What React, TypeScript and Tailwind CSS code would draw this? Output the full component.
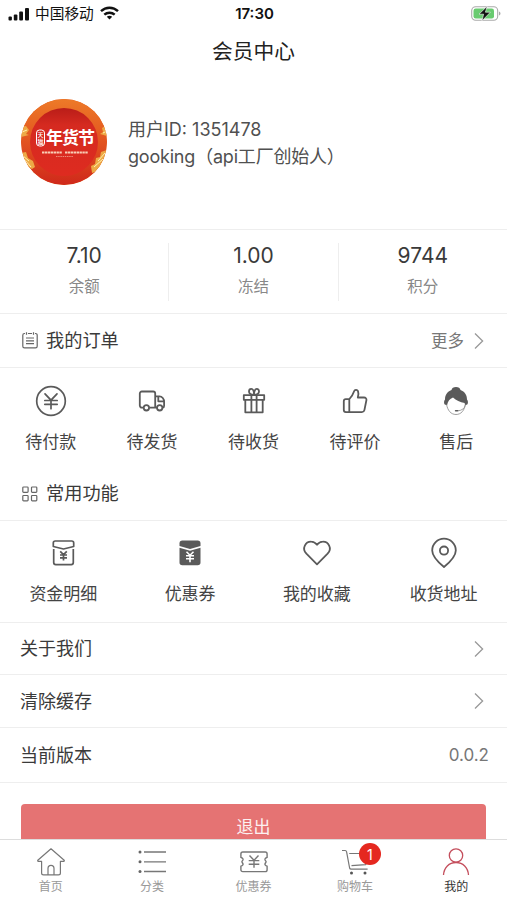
import type { ReactNode } from "react";

type IconItem = { label: string; icon: ReactNode };

const ink = "#5a5a5a";

function SignalIcon() {
  return (
    <svg width="22" height="14" viewBox="0 0 22 14" fill="#111">
      <rect x="0.5" y="9.5" width="3.4" height="4" rx="1" />
      <rect x="5.8" y="7.5" width="3.6" height="6" rx="1" />
      <rect x="11.2" y="4.5" width="3.8" height="9" rx="1" />
      <rect x="17" y="1" width="4" height="12.5" rx="1" />
    </svg>
  );
}

function WifiIcon() {
  return (
    <svg width="19" height="14" viewBox="0 0 19 14" fill="none" stroke="#111" strokeWidth="2.4">
      <path d="M1 5.2C5.8 .6 13.2 .6 18 5.2" />
      <path d="M4.3 8.7c3-2.7 7.4-2.7 10.4 0" />
      <path d="M9.5 13.4L6.8 10.8c1.6-1.3 3.8-1.3 5.4 0z" fill="#111" stroke="none" />
    </svg>
  );
}

function BatteryIcon() {
  return (
    <svg width="30" height="16" viewBox="0 0 30 16">
      <rect x="0.7" y="0.8" width="26" height="13.4" rx="4" fill="#fff" stroke="#aaa" strokeWidth="1.1" />
      <rect x="2.5" y="2.6" width="20.5" height="9.8" rx="2.2" fill="#69cb70" />
      <path d="M28 5.5v4c2-.7 2-3.3 0-4z" fill="#aaa" />
      <path d="M16.2 .2L8 8.2h4.6L11 14.800l8.400-8.600h-5z" fill="#111" stroke="#fff" strokeWidth=".6" />
    </svg>
  );
}

function Avatar() {
  return (
    <div className="relative size-[86px] shrink-0 overflow-hidden rounded-full bg-[#e6601f]">
      <svg className="absolute inset-0" width="86" height="86" viewBox="0 0 86 86">
        <defs>
          <linearGradient id="ring" x1="0" y1="0" x2="0" y2="1">
            <stop offset="0" stopColor="#ed7a28" />
            <stop offset="0.5" stopColor="#e2531f" />
            <stop offset="1" stopColor="#cf281b" />
          </linearGradient>
          <linearGradient id="disc" x1="0" y1="0" x2="0" y2="1">
            <stop offset="0" stopColor="#b91d18" />
            <stop offset="0.25" stopColor="#d52a20" />
            <stop offset="1" stopColor="#de2b20" />
          </linearGradient>
        </defs>
        <circle cx="43" cy="43" r="43" fill="url(#ring)" />
        <circle cx="43" cy="43" r="34" fill="url(#disc)" />
        <path d="M0 28l5-1 3 4-3 4 3 1-8 2zM0 54l5-1 2 6 5 3 2 6-3 2-6-3zM86 51l-6 2-1 5-4 1-1 6-4 2 1 7 6-2 9-12zM86 26l-5 3 1 4-3 2 7 2z" fill="#edaa46" />
        <path d="M1 56l7 6M3 60l7 8M84 54l-7 8M82 60l-9 8M1 33l5-2M82 34l4-2" stroke="#fff0b0" strokeWidth="1" />
        <rect x="15.5" y="31" width="8" height="16" rx="3" fill="none" stroke="#fff" strokeWidth="1" />
      </svg>
      <div className="absolute left-[16px] top-[32px] w-[7px] text-center text-[6px] font-medium leading-[7px] text-white">
        天猫
      </div>
      <div className="absolute left-[25px] top-[29px] whitespace-nowrap text-[17px] font-bold leading-[20px] tracking-[-1px] text-white">
        年货节
      </div>
      <svg className="absolute inset-0" width="86" height="86" viewBox="0 0 86 86" stroke="#f8cdb5">
        <path d="M21 53.5h20M44 53.5h23" strokeWidth="1.8" strokeDasharray="2.4 .5" />
        <path d="M35 57.5h17" strokeWidth="1" strokeDasharray="1.5 .7" strokeOpacity=".6" />
      </svg>
    </div>
  );
}

function Chevron() {
  return (
    <svg width="10" height="18" viewBox="0 0 10 18" fill="none" stroke="#999" strokeWidth="1.3">
      <path d="M1 1.5L8.6 9 1 16.5" />
    </svg>
  );
}

const stats = [
  { value: "7.10", label: "余额" },
  { value: "1.00", label: "冻结" },
  { value: "9744", label: "积分" },
];

const orders: IconItem[] = [
  {
    label: "待付款",
    icon: (
      <svg width="32" height="32" viewBox="0 0 32 32" fill="none" stroke={ink} strokeWidth="1.7" strokeLinecap="round">
        <circle cx="16" cy="16" r="14.3" />
        <path d="M10 8.8l6 6.4 6-6.4M16 15.2v8.5M9.8 15.5h12.4M9.8 19.3h12.4" />
      </svg>
    ),
  },
  {
    label: "待发货",
    icon: (
      <svg width="32" height="32" viewBox="0 0 32 32" fill="none" stroke={ink} strokeWidth="1.8" strokeLinejoin="round">
        <path d="M7.3 22.6H5.8a2 2 0 0 1-2-2V8.5a2 2 0 0 1 2-2h11.4a2 2 0 0 1 2 2v14.1M13.500 22.600h7.500M19.200 11.400h4.300c2.600 0 4.600 2.600 4.600 5.400v4c0 1-.5 1.700-1.200 1.800M22.300 12v4.300h5.600" />
        <circle cx="10.4" cy="22.8" r="2.7" fill="#fff" />
        <circle cx="23.7" cy="22.8" r="2.7" fill="#fff" />
      </svg>
    ),
  },
  {
    label: "待收货",
    icon: (
      <svg width="32" height="32" viewBox="0 0 32 32" fill="none" stroke={ink} strokeWidth="1.8" strokeLinejoin="round">
        <rect x="5.8" y="10.200" width="20.400" height="4.600" />
        <path d="M7.300 14.800v12.500h17.400V14.800M13.400 10.200v17.100M18.600 10.200v17.100" />
        <path d="M16 9.600c-3 0-5-1.400-5-3.200 0-1.500 1-2.500 2.300-2.500 1.800 0 2.700 2.600 2.700 5.700zm0 0c0-3.100 1-5.700 2.800-5.700C20.100 3.900 21 5 21 6.400c0 1.800-2 3.200-5 3.200z" />
      </svg>
    ),
  },
  {
    label: "待评价",
    icon: (
      <svg width="32" height="32" viewBox="0 0 32 32" fill="none" stroke={ink} strokeWidth="1.800" strokeLinejoin="round">
        <path d="M10.300 14.200H6.800a2 2 0 0 0-2 2v8.900a2 2 0 0 0 2 2h16.100a2.600 2.600 0 0 0 2.500-2l2-9.800c.300-1.700-.8-2.800-2.400-2.800h-6.200c.7-2.200.9-4.500.2-6.300-.8-1.900-3.300-1.700-3.900.1-1.100 3.200-2.700 6-4.800 7.900zM10.300 14.200v12.900" />
      </svg>
    ),
  },
  {
    label: "售后",
    icon: (
      <svg width="32" height="32" viewBox="0 0 32 32">
        <path d="M6.500 19C7.500 25.500 11 29.500 16 29.500s8.500-4 9.500-10.500" fill="#fff" stroke="#888" strokeWidth=".8" />
        <path
          d="M16 2c-2.500 0-4.200 1.300-4.500 3.100C7.200 6.800 5 10.200 5 14.500c-1.300 1.200-1.300 4.200 0 5.200h2.200c.5-3.200 2.500-6 5.800-7.200 3.200 3 7 4.800 11.600 5.500l.4 1.700h2c1.300-1 1.300-4 0-5.200 0-4.300-2.200-7.700-6.500-9.400C20.200 3.300 18.500 2 16 2z"
          fill={ink}
        />
        <path d="M25.300 20c-.8 3.700-3.300 5.300-7.300 5.800" fill="none" stroke="#888" strokeWidth=".8" />
        <rect x="14.800" y="25" width="3.600" height="1.600" rx=".8" fill={ink} />
      </svg>
    ),
  },
];

const features: IconItem[] = [
  {
    label: "资金明细",
    icon: (
      <svg width="32" height="32" viewBox="0 0 32 32" fill="none" stroke={ink} strokeWidth="1.7" strokeLinejoin="round">
        <path d="M6.300 9.500V6c0-1.200.7-2 2-2h16.400c1.200 0 2 .8 2 2v3.500L16.500 12z" />
        <path d="M6.700 12v13.600c0 1.200.8 2 2 2h15.600c1.200 0 2-.8 2-2V12" />
        <path d="M13.200 14.300l3.300 3.300 3.300-3.300M16.500 17.500v6M13 18h7M13 20.800h7" />
      </svg>
    ),
  },
  {
    label: "优惠券",
    icon: (
      <svg width="32" height="32" viewBox="0 0 32 32">
        <path d="M5.500 9V6.200c0-1.800 1-2.800 2.800-2.800h15.400c1.800 0 2.800 1 2.800 2.800V9L16 12z" fill={ink} />
        <path d="M5.500 10.800L16 13.700l10.500-2.900v14.700c0 1.800-1 2.800-2.800 2.800H8.300c-1.800 0-2.800-1-2.800-2.800z" fill={ink} />
        <path d="M12.500 14.800l3.500 3.400 3.500-3.400M16 18.200v7M12 18.700h8M12 21.800h8" fill="none" stroke="#fff" strokeWidth="1.6" />
      </svg>
    ),
  },
  {
    label: "我的收藏",
    icon: (
      <svg width="32" height="32" viewBox="0 0 32 32" fill="none" stroke={ink} strokeWidth="1.8" strokeLinejoin="round">
        <path d="M16 27.300L5.400 16.700c-5-5.400-.8-12.300 4.900-12.100 2.500 0 4.200 1.300 5.700 3.200 1.500-1.900 3.200-3.200 5.700-3.200 5.700-.2 9.900 6.700 4.900 12.100z" />
      </svg>
    ),
  },
  {
    label: "收货地址",
    icon: (
      <svg width="32" height="32" viewBox="0 0 32 32" fill="none" stroke={ink} strokeWidth="1.8" strokeLinejoin="round">
        <path d="M16 30C9.500 24.700 4.200 19.500 4.200 13.500a11.800 11.800 0 0 1 23.600 0C27.800 19.500 22.500 24.700 16 30z" />
        <circle cx="16" cy="13.6" r="4.1" />
      </svg>
    ),
  },
];

const rows = [
  { label: "关于我们", height: "h-[52px]" },
  { label: "清除缓存", height: "h-[53px]" },
  { label: "当前版本", height: "h-[55px]", value: "0.0.2" },
];

const tabs: (IconItem & { badge?: number; active?: boolean })[] = [
  {
    label: "首页",
    icon: (
      <svg width="28" height="28" viewBox="0 0 28 28" fill="none" stroke="#777" strokeWidth="1.2" strokeLinejoin="round">
        <path d="M14 .8L.8 12.200c-.3.700.2 1.200.8 1.200h3V25c0 1.200.7 1.900 1.900 1.900h15c1.200 0 1.900-.7 1.900-1.900V13.400h3c.6 0 1.100-.5.8-1.200z" />
        <path d="M11 26.900v-6.400c0-4.200 6-4.200 6 0v6.400" />
      </svg>
    ),
  },
  {
    label: "分类",
    icon: (
      <svg width="28" height="28" viewBox="0 0 28 28" fill="#666" stroke="#777" strokeWidth="1.3">
        <path d="M6 4h22M6 13.800h22M6 23.500h22" />
        <g stroke="none">
          <circle cx="2" cy="4" r="1.5" />
          <circle cx="2" cy="13.800" r="1.5" />
          <circle cx="2" cy="23.500" r="1.5" />
        </g>
      </svg>
    ),
  },
  {
    label: "优惠券",
    icon: (
      <svg width="28" height="28" viewBox="0 0 28 28" fill="none" stroke="#777" strokeWidth="1.4" strokeLinejoin="round">
        <path d="M2.800 4h22.400c1.200 0 1.900.7 1.900 1.900v3.500c-1.500.6-2.500 1.500-2 2.600.4.800 1 1.300 1 1.800s-.6 1-1 1.800c-.5 1.100.5 2 2 2.600v3.500c0 1.200-.7 1.900-1.900 1.900H2.800c-1.200 0-1.900-.7-1.900-1.900v-3.500c1.500-.6 2.500-1.500 2-2.600-.4-.8-1-1.300-1-1.800s.6-1 1-1.800c.5-1.100-.5-2-2-2.600V5.900C.9 4.700 1.600 4 2.800 4z" />
        <path d="M9.500 7.500l4.500 4.800 4.500-4.800M14 12.300v7.500M8.700 12.600h10.600M8.700 16.200h10.600" />
      </svg>
    ),
  },
  {
    label: "购物车",
    badge: 1,
    icon: (
      <svg width="28" height="28" viewBox="0 0 28 28" fill="none" stroke="#777" strokeWidth="1.2" strokeLinejoin="round">
        <path d="M1 2.500h3.200c.8 0 1.200.5 1.400 1.300l3 16.200c.2.800.7 1.200 1.500 1.200h16.500M8.200 5.500h18.300L24.800 16.700l-14.300 1" />
        <circle cx="10.500" cy="25" r="1.5" fill="#555" stroke="none" />
        <circle cx="24" cy="25" r="1.5" fill="#555" stroke="none" />
      </svg>
    ),
  },
  {
    label: "我的",
    active: true,
    icon: (
      <svg width="28" height="28" viewBox="0 0 28 28" fill="none" stroke="#c44e5c" strokeWidth="1.3">
        <circle cx="14" cy="7.500" r="6.700" />
        <path d="M1.500 27C2 19.500 7 14.500 14 14.500S26 19.500 26.500 27" />
      </svg>
    ),
  },
];

function IconGrid({ items, className }: { items: IconItem[]; className: string }) {
  return (
    <div className={`flex ${className}`}>
      {items.map((item) => (
        <div key={item.label} className="flex flex-1 flex-col items-center">
          {item.icon}
          <span className="mt-3 text-[17px] leading-[26px] text-[#444]">{item.label}</span>
        </div>
      ))}
    </div>
  );
}

export default function App() {
  return (
    <div className="flex h-[900px] w-full flex-col overflow-hidden bg-white font-[Inter,'Noto_Sans_CJK_SC',sans-serif] text-[#3a3a3a]">
      <main className="flex min-h-0 flex-1 flex-col overflow-hidden">
        <div className="grid h-7 shrink-0 grid-cols-3 items-center pl-2 pr-[6px] text-[#111]">
          <div className="flex items-center">
            <SignalIcon />
            <span className="ml-[5px] text-[14.700px] leading-none">中国移动</span>
            <span className="ml-1.5 -mt-0.5">
              <WifiIcon />
            </span>
          </div>
          <span className="text-center text-[15px] font-semibold">17:30</span>
          <div className="flex justify-end">
            <BatteryIcon />
          </div>
        </div>

        <h1 className="flex h-12 shrink-0 items-center justify-center text-[20.700px] text-[#222]">会员中心</h1>

        <section className="flex h-[153px] shrink-0 items-start pl-[21px] pt-[23px]">
          <Avatar />
          <div className="ml-[21px] mt-[17px] text-[18px] leading-[27px] text-[#505050]">
            <p>用户ID: 1351478</p>
            <p className="tracking-[-0.2px]">gooking（api工厂创始人）</p>
          </div>
        </section>

        <section className="flex h-[84px] shrink-0 items-center border-t border-[#eee]">
          {stats.map((stat) => (
            <div
              key={stat.label}
              className="flex h-[58px] flex-1 flex-col items-center border-r border-[#eee] last:border-r-0"
            >
              <span className="text-[21px] leading-[26px]">{stat.value}</span>
              <span className="mt-1.5 text-[15.5px] leading-6 text-[#888]">{stat.label}</span>
            </div>
          ))}
        </section>

        <div className="flex h-[55px] shrink-0 items-center border-y border-[#eee] pl-[22px] pr-[23px]">
          <svg width="16" height="18" viewBox="0 0 16 18" fill="none" stroke="#666" strokeWidth="1.2">
            <path d="M3 1.500h-.5C1.500 1.500.8 2.200.8 3.200v11c0 1 .7 1.700 1.700 1.700h11c1 0 1.700-.7 1.700-1.700v-11c0-1-.7-1.700-1.700-1.700H13M6 1.500h4M4.500.300v2.400M11.500.300v2.400M4 6h8M4 8.800h8M4 11.600h8" />
          </svg>
          <span className="ml-2 text-[18.2px]">我的订单</span>
          <span className="ml-auto mr-2.5 mt-0.5 text-[16.5px] text-[#777]">更多</span>
          <Chevron />
        </div>

        <IconGrid items={orders} className="h-[100px] shrink-0 pt-[17px]" />

        <div className="flex h-[53px] shrink-0 items-center border-b border-[#eee] pl-[22px]">
          <svg width="16" height="16" viewBox="0 0 16 16" fill="none" stroke="#666" strokeWidth="1.2">
            <rect x="0.8" y="1" width="5.3" height="5.3" rx=".8" />
            <rect x="9.5" y="1" width="5.3" height="5.3" rx=".8" />
            <rect x="0.8" y="9.5" width="5.3" height="5.3" rx=".8" />
            <rect x="9.5" y="9.5" width="5.3" height="5.3" rx=".8" />
          </svg>
          <span className="ml-2 text-[18.2px]">常用功能</span>
        </div>

        <IconGrid items={features} className="h-[102px] shrink-0 border-b border-[#eee] pt-4" />

        {rows.map((row) => (
          <div
            key={row.label}
            className={`flex shrink-0 items-center justify-between border-b border-[#eee] pl-5 ${row.value ? "pr-[18px]" : "pr-[23px]"} ${row.height}`}
          >
            <span className="text-[18px]">{row.label}</span>
            {row.value ? <span className="mt-0.5 text-[17px] text-[#777]">{row.value}</span> : <Chevron />}
          </div>
        ))}

        <button className="mx-[21px] mt-[21px] h-[47px] shrink-0 rounded-[4px] bg-[#e57373] text-[17px] text-white/90">
          退出
        </button>
      </main>

      <nav className="flex h-[61px] shrink-0 border-t border-[#ddd] bg-white">
        {tabs.map((tab) => (
          <div key={tab.label} className="flex flex-1 flex-col items-center pt-2">
            <div className="relative">
              {tab.icon}
              {tab.badge && (
                <span className="absolute -top-[5px] left-[18px] flex size-[22px] items-center justify-center rounded-full bg-[#e5281f] text-[14px] text-white">
                  {tab.badge}
                </span>
              )}
            </div>
            <span className={`mt-0.5 text-[12px] leading-[18px] ${tab.active ? "text-[#333]" : "text-[#999]"}`}>
              {tab.label}
            </span>
          </div>
        ))}
      </nav>
    </div>
  );
}
